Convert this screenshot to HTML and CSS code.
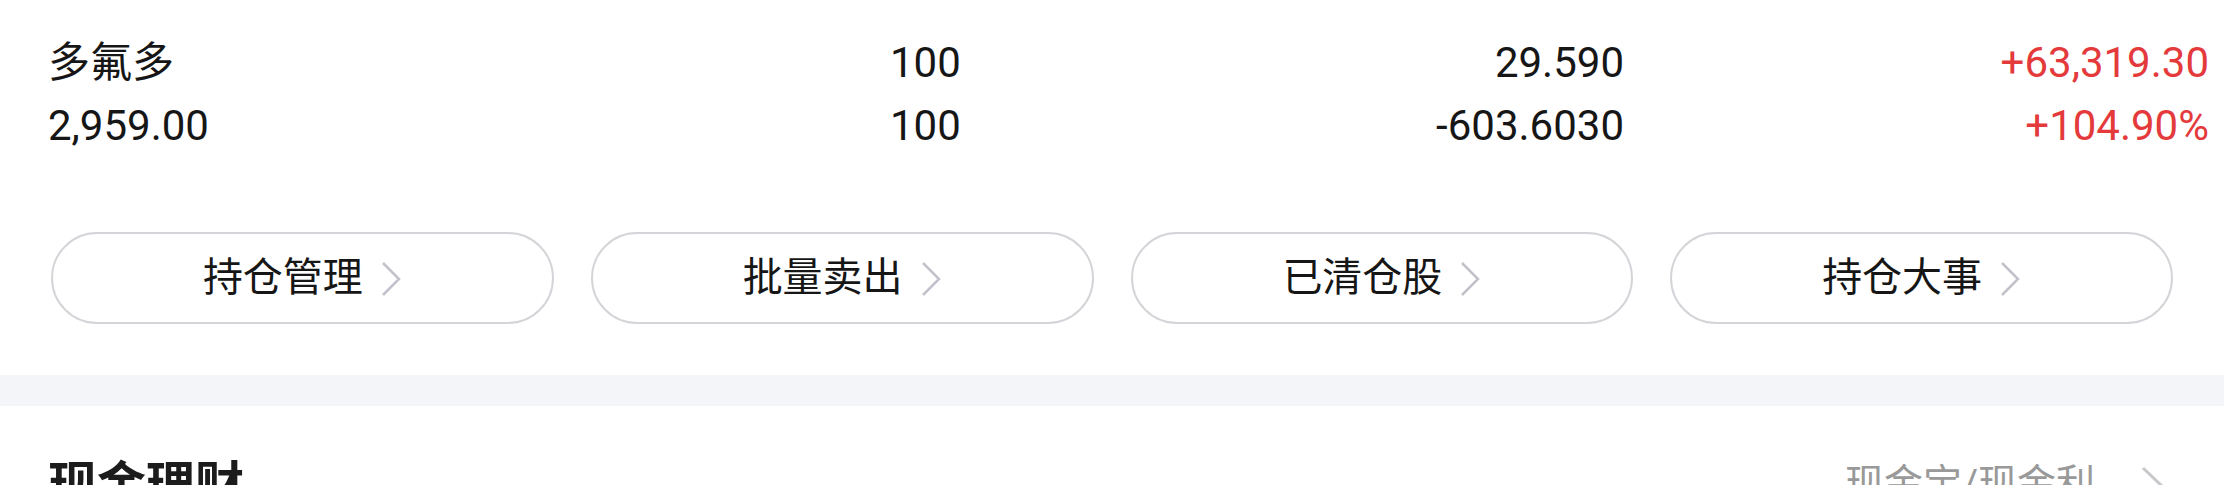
FILE: index.html
```html
<!DOCTYPE html>
<html lang="zh-CN">
<head>
<meta charset="utf-8">
<title>持仓</title>
<link rel="stylesheet" href="styles.css">
</head>
<body>
<div class="page">
  <section class="holdings">
    <div class="row">
      <div class="c1">多氟多</div>
      <div class="c2">100</div>
      <div class="c3">29.590</div>
      <div class="c4 up">+63,319.30</div>
    </div>
    <div class="row">
      <div class="c1">2,959.00</div>
      <div class="c2">100</div>
      <div class="c3">-603.6030</div>
      <div class="c4 up">+104.90%</div>
    </div>
    <div class="actions">
      <a class="btn"><span class="btn-label">持仓管理</span><svg class="chev" viewBox="0 0 22 38" width="22" height="38"><polyline points="3,3 19,19 3,35"/></svg></a>
      <a class="btn"><span class="btn-label">批量卖出</span><svg class="chev" viewBox="0 0 22 38" width="22" height="38"><polyline points="3,3 19,19 3,35"/></svg></a>
      <a class="btn"><span class="btn-label">已清仓股</span><svg class="chev" viewBox="0 0 22 38" width="22" height="38"><polyline points="3,3 19,19 3,35"/></svg></a>
      <a class="btn"><span class="btn-label">持仓大事</span><svg class="chev" viewBox="0 0 22 38" width="22" height="38"><polyline points="3,3 19,19 3,35"/></svg></a>
    </div>
  </section>
  <div class="band"></div>
  <section class="cash">
    <div class="cash-title">现金理财</div>
    <div class="cash-link"><span>现金宝/现金利</span><svg class="chev-lg" viewBox="0 0 26 44" width="26" height="44"><polyline points="3,3 23,22 3,41"/></svg></div>
  </section>
</div>
</body>
</html>
```
FILE: styles.css
```css
html, body {
  margin: 0;
  padding: 0;
  background: #ffffff;
}
body {
  font-family: Roboto, "Noto Sans CJK SC", sans-serif;
  color: #161616;
  width: 2224px;
  height: 485px;
  overflow: hidden;
}
.holdings {
  padding: 31px 0 0 0;
}
.row {
  display: grid;
  grid-template-columns: 842px 300px 434px 585px;
  padding: 0 15px 0 48px;
  height: 63px;
  line-height: 63px;
  font-size: 42px;
}
.c3, .c4 {
  text-align: right;
}
.up {
  color: #e43a3c;
}
.actions {
  display: flex;
  gap: 37px;
  padding: 75px 51px 0 51px;
}
.btn {
  flex: 1;
  height: 92px;
  box-sizing: border-box;
  border: 2px solid #d5d5d9;
  border-radius: 46px;
  display: flex;
  align-items: center;
  justify-content: center;
  gap: 17px;
  font-size: 40px;
  color: #161616;
}
.btn-label {
  line-height: 1;
}
.chev {
  margin-top: 2px;
}
.chev polyline {
  fill: none;
  stroke: #c2c2ca;
  stroke-width: 2.5;
}
.band {
  margin-top: 51px;
  height: 31px;
  background: #f4f5f8;
}
.cash {
  display: flex;
  justify-content: space-between;
  align-items: flex-start;
  padding: 55px 58px 0 48px;
}
.cash-title {
  font-size: 49px;
  font-weight: 700;
  line-height: 1;
  color: #1c1c1c;
}
.cash-link {
  display: flex;
  align-items: flex-start;
  gap: 45px;
  font-size: 39px;
  line-height: 1;
  color: #999999;
  padding-top: 4px;
}
.chev-lg polyline {
  fill: none;
  stroke: #c8c8cc;
  stroke-width: 3;
}
```
